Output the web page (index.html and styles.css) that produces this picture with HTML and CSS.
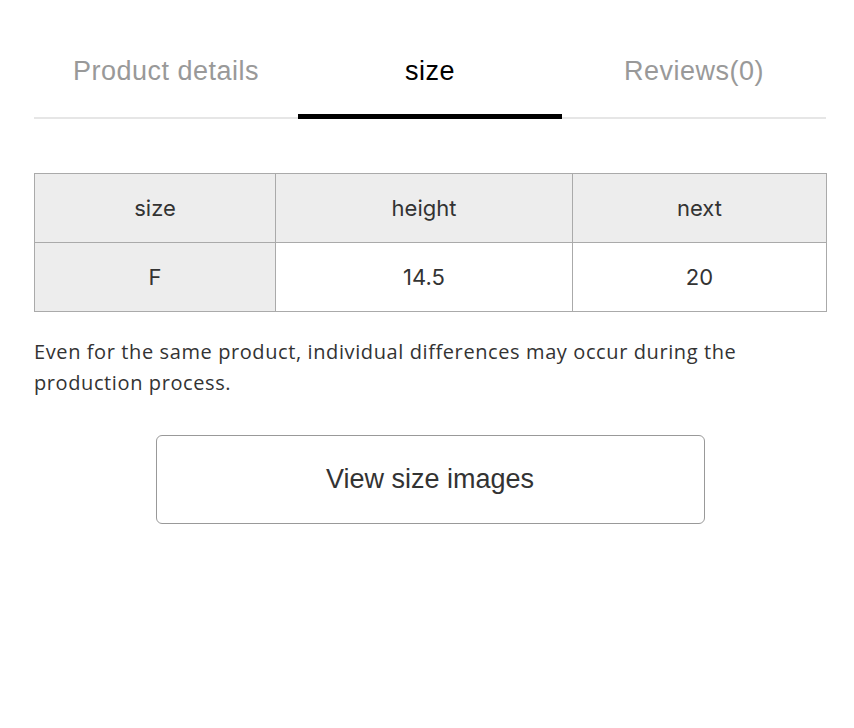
FILE: index.html
```html
<!DOCTYPE html>
<html>
<head>
<meta charset="utf-8">
<link rel="stylesheet" href="styles.css">
</head>
<body>
<div class="wrap">
  <div class="tabs">
    <div class="tab">Product details</div>
    <div class="tab active">size</div>
    <div class="tab">Reviews(0)</div>
  </div>
  <table class="size-table">
    <colgroup>
      <col class="c1"><col class="c2"><col class="c3">
    </colgroup>
    <tr class="head">
      <th>size</th><th>height</th><th>next</th>
    </tr>
    <tr>
      <th class="rowhead">F</th><td>14.5</td><td>20</td>
    </tr>
  </table>
  <p class="note">Even for the same product, individual differences may occur during the production process.</p>
  <div class="btn-row">
    <button class="btn">View size images</button>
  </div>
</div>
</body>
</html>
```
FILE: styles.css
```css
html, body {
  margin: 0;
  padding: 0;
  background: #fff;
}
body {
  font-family: "Liberation Sans", Arial, sans-serif;
  color: #333;
}
.wrap {
  padding: 42px 28px 0 34px;
  width: 792px;
}
.tabs {
  display: flex;
  border-bottom: 2px solid #e6e6e6;
}
.tab {
  flex: 1;
  text-align: center;
  font-size: 27px;
  letter-spacing: 0.5px;
  color: #999;
  line-height: 58px;
  margin-bottom: -2px;
  border-bottom: 4px solid transparent;
  box-sizing: border-box;
  height: 77px;
}
.tab.active {
  color: #000;
  border-bottom: 5px solid #000;
}
.size-table {
  margin-top: 54px;
  width: 792px;
  border-collapse: collapse;
  table-layout: fixed;
  font-family: "Inter", "Liberation Sans", sans-serif;
  font-size: 22px;
  color: #333;
}
.c1 { width: 241px; }
.c2 { width: 297px; }
.c3 { width: 254px; }
.size-table th, .size-table td {
  border: 1px solid #aaa;
  height: 68px;
  text-align: center;
  font-weight: normal;
  padding: 0;
}
.head th, .rowhead {
  background: #ededed;
}
.note {
  margin: 24px 0 0 0;
  font-family: "Open Sans", "Liberation Sans", sans-serif;
  font-size: 20px;
  letter-spacing: 0.6px;
  line-height: 31px;
  color: #333;
}
.btn-row {
  display: flex;
  justify-content: center;
  margin-top: 37px;
}
.btn {
  width: 549px;
  height: 89px;
  background: #fff;
  border: 1px solid #999;
  border-radius: 6px;
  font-family: "Liberation Sans", Arial, sans-serif;
  font-size: 27px;
  color: #333;
}
```
